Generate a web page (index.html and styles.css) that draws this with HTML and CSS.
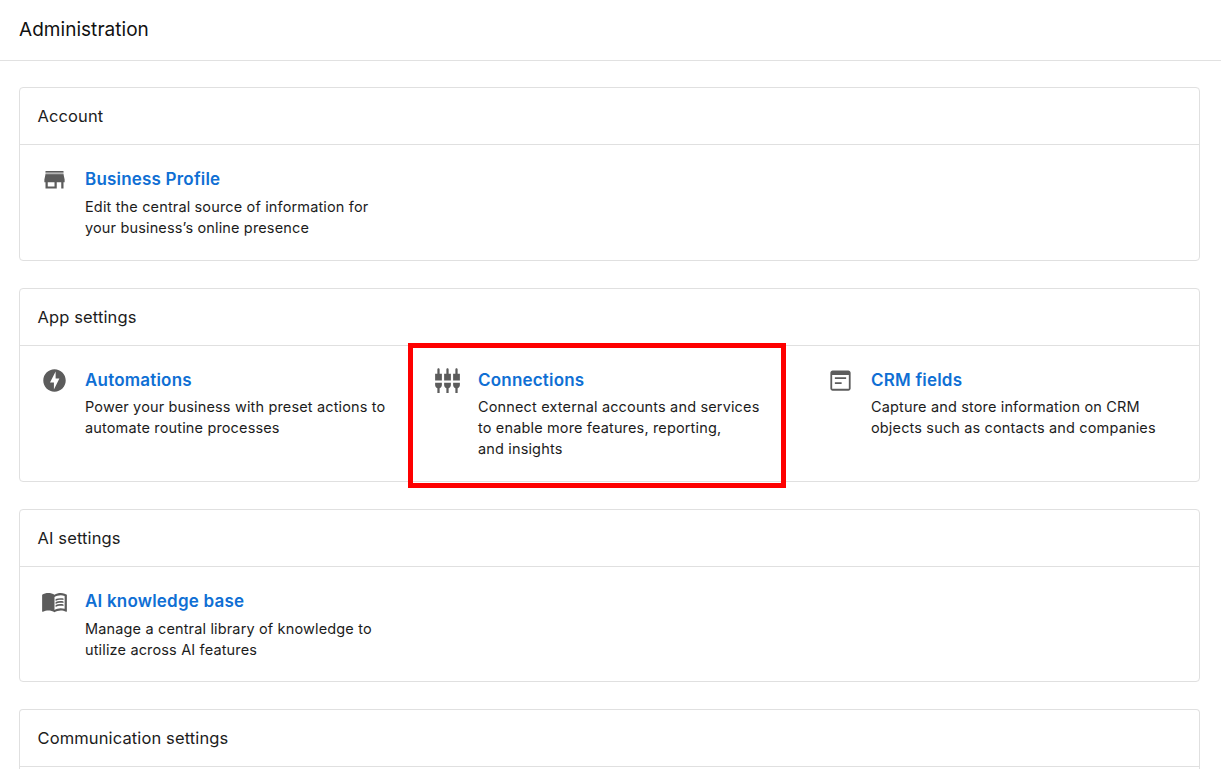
FILE: index.html
```html
<!DOCTYPE html>
<html lang="en">
<head>
<meta charset="utf-8">
<title>Administration</title>
<link rel="stylesheet" href="styles.css">
</head>
<body>
<header class="topbar"><h1>Administration</h1></header>
<main class="content">
  <section class="card account">
    <h2>Account</h2>
    <div class="items">
      <article class="item">
        <svg class="icon" viewBox="0 0 24 24"><path opacity=".45" d="M4 5.600h16V8H4z"/><path d="M4 4.400h16v1.400H4zM21 14.500v-2.500l-1-4.700H4L3 12v2.500h1V20h10v-5.500h4V20h2v-5.500h1zM12 18.300H6v-3.800h6v3.800z"/></svg>
        <div class="text"><a class="link">Business Profile</a><p>Edit the central source of information for<br>your business’s online presence</p></div>
      </article>
    </div>
  </section>
  <section class="card app">
    <h2>App settings</h2>
    <div class="items">
      <article class="item">
        <svg class="icon" viewBox="0 0 24 24"><path d="M12 2.02c-5.51 0-9.98 4.47-9.98 9.98s4.47 9.98 9.98 9.98 9.98-4.47 9.98-9.98S17.51 2.02 12 2.02zM11.48 20v-6.26H8L13 4v6.26h3.35L11.48 20z"/></svg>
        <div class="text"><a class="link">Automations</a><p>Power your business with preset actions to<br>automate routine processes</p></div>
      </article>
      <article class="item highlighted">
        <svg class="icon" viewBox="0 0 24 24"><path d="M5 2c0-.55-.45-1-1-1s-1 .45-1 1v4H1v6h6V6H5V2zm4 14c0 1.3.84 2.4 2 2.82V23h2v-4.18c1.16-.41 2-1.51 2-2.82v-2H9v2zm-8 0c0 1.3.84 2.4 2 2.82V23h2v-4.18C6.16 18.4 7 17.3 7 16v-2H1v2zM21 6V2c0-.55-.45-1-1-1s-1 .45-1 1v4h-2v6h6V6h-2zm-8-4c0-.55-.45-1-1-1s-1 .45-1 1v4H9v6h6V6h-2V2zm4 14c0 1.3.84 2.4 2 2.82V23h2v-4.18c1.16-.41 2-1.51 2-2.82v-2h-6v2z"/></svg>
        <div class="text"><a class="link">Connections</a><p>Connect external accounts and services<br>to enable more features, reporting,<br>and insights</p></div>
      </article>
      <article class="item">
        <svg class="icon" viewBox="0 0 24 24"><path d="M19 3H5c-1.11 0-2 .9-2 2v14c0 1.1.89 2 2 2h14c1.1 0 2-.9 2-2V5c0-1.1-.9-2-2-2zm0.400 16.400H4.600V7h14.800v12.400zM17 10.700H7V9.200h10v1.500zM13 15H7v-1.500h6V15z"/></svg>
        <div class="text"><a class="link">CRM fields</a><p>Capture and store information on CRM<br>objects such as contacts and companies</p></div>
      </article>
    </div>
  </section>
  <section class="card ai">
    <h2>AI settings</h2>
    <div class="items">
      <article class="item">
        <svg class="icon" viewBox="0 0 24 24"><path d="M21 5c-1.11-.35-2.33-.5-3.5-.5-1.95 0-4.05.4-5.5 1.5-1.45-1.1-3.55-1.5-5.5-1.5S2.45 4.9 1 6v14.65c0 .25.25.5.5.5.1 0 .15-.05.25-.05C3.1 20.45 5.05 20 6.5 20c1.95 0 4.05.4 5.5 1.5 1.35-.85 3.8-1.5 5.5-1.5 1.65 0 3.35.3 4.75 1.05.1.05.15.05.25.05.25 0 .5-.25.5-.5V6c-.6-.45-1.25-.75-2-1zm0 13.5c-1.1-.35-2.3-.5-3.500-.5-1.700 0-4.150.65-5.500 1.500V8c1.350-.85 3.800-1.500 5.500-1.500 1.200 0 2.400.15 3.500.5v11.500z"/><path d="M17.500 10.500c.88 0 1.730.09 2.500.26V9.240c-.79-.15-1.640-.24-2.500-.24-1.700 0-3.240.29-4.500.83v1.660c1.130-.64 2.700-.99 4.500-.99zM13 12.490v1.660c1.130-.64 2.700-.99 4.500-.99.88 0 1.730.09 2.500.26V11.900c-.79-.15-1.640-.24-2.500-.24-1.700 0-3.240.3-4.500.83zM17.500 14.330c-1.700 0-3.240.29-4.500.83v1.660c1.130-.64 2.700-.99 4.500-.99.88 0 1.730.09 2.500.26v-1.520c-.79-.16-1.640-.24-2.500-.24z"/></svg>
        <div class="text"><a class="link">AI knowledge base</a><p>Manage a central library of knowledge to<br>utilize across AI features</p></div>
      </article>
    </div>
  </section>
  <section class="card communication">
    <h2>Communication settings</h2>
  </section>
</main>
</body>
</html>
```
FILE: styles.css
```css
* { box-sizing: border-box; }
body { margin: 0; height: 769px; overflow: hidden; background: #fff; color: #1c1c1c; font-family: Inter, sans-serif; }
.topbar { height: 61px; padding: 0 19px; border-bottom: 1px solid #e1e1e1; }
h1 { margin: 0; color: #111; font-size: 19px; line-height: 59px; font-weight: 400; letter-spacing: 0.04px; }
.content { display: flex; flex-direction: column; gap: 27px; height: 708px; overflow: hidden; padding: 26px 21px 0 19px; }
.card { flex: none; border: 1px solid #e0e0e0; border-radius: 4px; }
.account { height: 174px; }
.app { height: 194px; }
.ai { height: 173px; }
.communication { flex: 1 0 auto; border-bottom: 0; border-radius: 4px 4px 0 0; }
h2 { margin: 0; height: 57px; padding: 0 17.500px; border-bottom: 1px solid #e0e0e0; font-size: 16.500px; line-height: 57px; font-weight: 400; letter-spacing: 0.120px; }
.items { display: grid; grid-template-columns: repeat(3, 1fr); }
.item { position: relative; display: flex; gap: 17px; padding: 21px 0 0 21px; }
.icon { flex: none; width: 27px; height: 27px; fill: #5c5c5c; }
.text { white-space: nowrap; }
.link { display: block; color: #0f6fd4; font-size: 17px; line-height: 26px; font-weight: 600; letter-spacing: 0.200px; }
p { margin: 4px 0 0; font-size: 14.500px; line-height: 21.200px; letter-spacing: 0.150px; }
.app p { margin-top: 3px; }
.highlighted::after { content: ""; box-sizing: border-box; position: absolute; left: -5px; top: -3px; width: 378px; height: 145px; border: 5px solid #fe0000; }
```
